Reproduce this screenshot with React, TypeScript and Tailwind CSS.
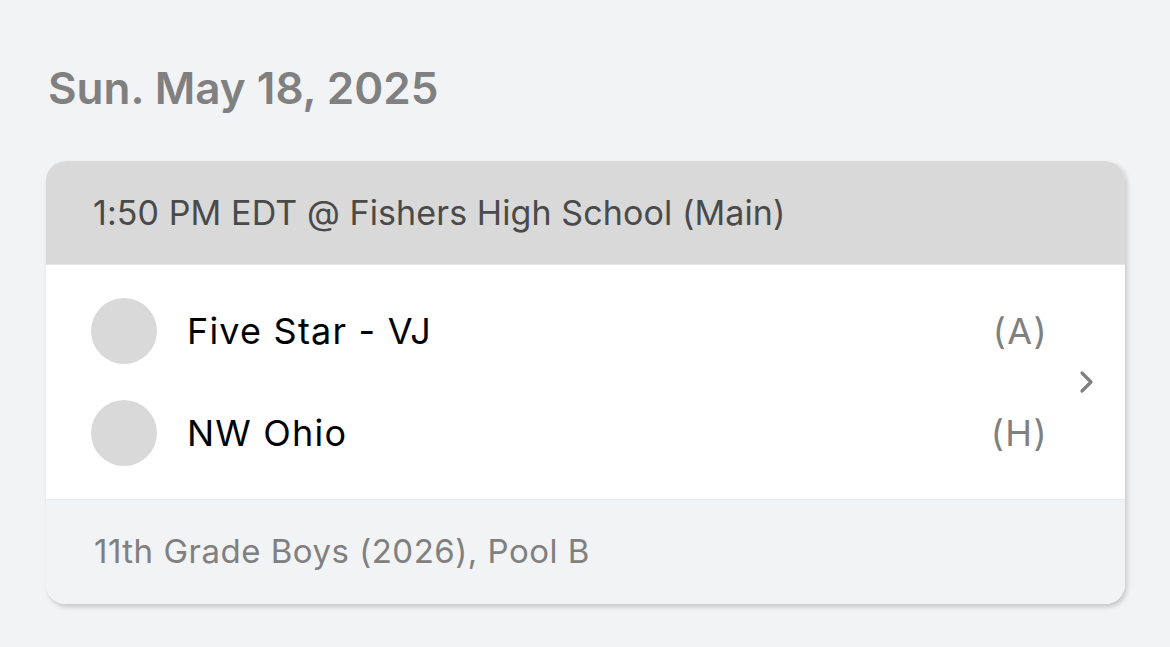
export default function App() {
  const teams = [
    { name: "Five Star - VJ", side: "(A)" },
    { name: "NW Ohio", side: "(H)" },
  ];

  return (
    <main
      className="min-h-screen w-full bg-[#f2f3f5] px-[46px] pt-[63px]"
      style={{ fontFamily: "Inter, 'Noto Sans', sans-serif" }}
    >
      <h1 className="pl-[2px] text-[44px] font-semibold leading-[50px] text-[#808080]">
        Sun. May 18, 2025
      </h1>

      {/* Game card */}
      <div className="mt-[48px] w-[1079px] overflow-hidden rounded-[20px] bg-white shadow-[2px_3px_5px_rgba(0,0,0,0.18)]">
        <div className="flex h-[104px] items-center bg-[#d9d9d9] px-[47px] border-b border-[#e6e6e6]">
          <span className="text-[34px] tracking-[0.1px] text-[#4a4a4a]">
            1:50 PM EDT @ Fishers High School (Main)
          </span>
        </div>

        <div className="flex items-center bg-white pl-[45px] pr-[29px]">
          <div className="flex flex-1 flex-col py-[33px] gap-[36px]">
            {teams.map((t) => (
              <div key={t.name} className="flex h-[66px] items-center">
                <div className="h-[66px] w-[66px] rounded-full bg-[#d9d9d9]" />
                <span className="ml-[30px] flex-1 text-[36px] tracking-[1.2px] text-black">
                  {t.name}
                </span>
                <span className="text-[36px] tracking-[1.4px] text-[#808080]">{t.side}</span>
              </div>
            ))}
          </div>
          <svg
            className="ml-[30px] h-[26px] w-[18px]"
            viewBox="0 0 18 26"
            fill="none"
            stroke="#808080"
            strokeWidth="3.2"
            strokeLinecap="round"
            strokeLinejoin="round"
          >
            <path d="M4 4 L13 13 L4 22" />
          </svg>
        </div>

        <div className="flex h-[105px] items-center border-t border-[#e8e9eb] bg-[#f2f3f5] px-[48px]">
          <span className="text-[33px] tracking-[0.5px] text-[#808080]">
            11th Grade Boys (2026), Pool B
          </span>
        </div>
      </div>
    </main>
  );
}
